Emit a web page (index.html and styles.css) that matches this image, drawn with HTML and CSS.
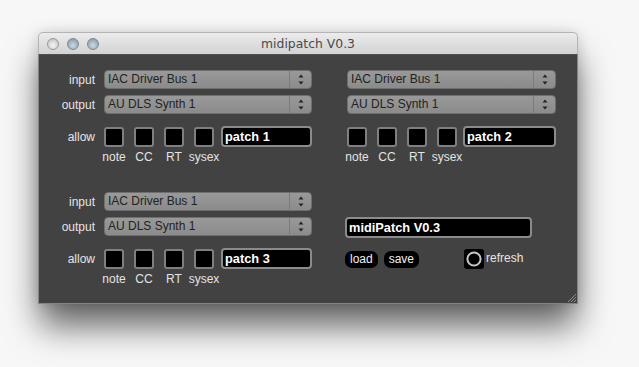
FILE: index.html
```html
<!DOCTYPE html>
<html>
<head>
<meta charset="utf-8">
<title>midipatch V0.3</title>
<link rel="stylesheet" href="styles.css">
</head>
<body>
<div class="window">
  <div class="titlebar">
    <div class="lights"><span class="light close"></span><span class="light mini"></span><span class="light zoom"></span></div>
    <div class="title">midipatch V0.3</div>
    <div></div>
  </div>
  <div class="content">
    <div class="patch">
      <div class="row sel-row">
        <div class="lbl">input</div>
        <div class="select"><span class="val">IAC Driver Bus 1</span><span class="arrows"><svg width="20" height="17" viewBox="0 0 20 17"><path d="M7.5 6.5 L12.5 6.5 L10 3.5 Z M7.5 10.5 L12.5 10.5 L10 13.5 Z" fill="#222"/></svg></span></div>
      </div>
      <div class="row sel-row">
        <div class="lbl">output</div>
        <div class="select"><span class="val">AU DLS Synth 1</span><span class="arrows"><svg width="20" height="17" viewBox="0 0 20 17"><path d="M7.5 6.5 L12.5 6.5 L10 3.5 Z M7.5 10.5 L12.5 10.5 L10 13.5 Z" fill="#222"/></svg></span></div>
      </div>
      <div class="row allow-row">
        <div class="lbl">allow</div>
        <div class="checks"><span class="chk"></span><span class="chk"></span><span class="chk"></span><span class="chk"></span></div>
        <div class="field">patch 1</div>
      </div>
      <div class="row cap-row">
        <div class="lbl"></div>
        <div class="caps"><span class="cap"><span>note</span></span><span class="cap"><span>CC</span></span><span class="cap"><span>RT</span></span><span class="cap"><span>sysex</span></span></div>
      </div>
    </div>

    <div class="patch right">
      <div class="row sel-row">
        <div class="select wide"><span class="val">IAC Driver Bus 1</span><span class="arrows"><svg width="20" height="17" viewBox="0 0 20 17"><path d="M7.5 6.5 L12.5 6.5 L10 3.5 Z M7.5 10.5 L12.5 10.5 L10 13.5 Z" fill="#222"/></svg></span></div>
      </div>
      <div class="row sel-row">
        <div class="select wide"><span class="val">AU DLS Synth 1</span><span class="arrows"><svg width="20" height="17" viewBox="0 0 20 17"><path d="M7.5 6.5 L12.5 6.5 L10 3.5 Z M7.5 10.5 L12.5 10.5 L10 13.5 Z" fill="#222"/></svg></span></div>
      </div>
      <div class="row allow-row">
        <div class="checks"><span class="chk"></span><span class="chk"></span><span class="chk"></span><span class="chk"></span></div>
        <div class="field narrow-gap">patch 2</div>
      </div>
      <div class="row cap-row">
        <div class="caps"><span class="cap"><span>note</span></span><span class="cap"><span>CC</span></span><span class="cap"><span>RT</span></span><span class="cap"><span>sysex</span></span></div>
      </div>
    </div>

    <div class="patch">
      <div class="row sel-row">
        <div class="lbl">input</div>
        <div class="select"><span class="val">IAC Driver Bus 1</span><span class="arrows"><svg width="20" height="17" viewBox="0 0 20 17"><path d="M7.5 6.5 L12.5 6.5 L10 3.5 Z M7.5 10.5 L12.5 10.5 L10 13.5 Z" fill="#222"/></svg></span></div>
      </div>
      <div class="row sel-row">
        <div class="lbl">output</div>
        <div class="select"><span class="val">AU DLS Synth 1</span><span class="arrows"><svg width="20" height="17" viewBox="0 0 20 17"><path d="M7.5 6.5 L12.5 6.5 L10 3.5 Z M7.5 10.5 L12.5 10.5 L10 13.5 Z" fill="#222"/></svg></span></div>
      </div>
      <div class="row allow-row">
        <div class="lbl">allow</div>
        <div class="checks"><span class="chk"></span><span class="chk"></span><span class="chk"></span><span class="chk"></span></div>
        <div class="field">patch 3</div>
      </div>
      <div class="row cap-row">
        <div class="lbl"></div>
        <div class="caps"><span class="cap"><span>note</span></span><span class="cap"><span>CC</span></span><span class="cap"><span>RT</span></span><span class="cap"><span>sysex</span></span></div>
      </div>
    </div>

    <div class="panel">
      <div class="spacer"></div>
      <div class="field name">midiPatch V0.3</div>
      <div class="btn-row">
        <span class="btn">load</span>
        <span class="btn">save</span>
        <span class="toggle"><svg width="20" height="20" viewBox="0 0 20 20"><circle cx="10" cy="10" r="6.6" fill="none" stroke="#c6c6c6" stroke-width="2"/></svg></span>
        <span class="toggle-lbl">refresh</span>
      </div>
    </div>

    <svg class="grip" width="12" height="12" viewBox="0 0 12 12"><path d="M11 3 L3 11 M11 6 L6 11 M11 9 L9 11" stroke="#8e8e8e" stroke-width="1"/></svg>
  </div>
</div>
</body>
</html>
```

FILE: styles.css
```css
html, body {
  margin: 0;
  padding: 0;
}
body {
  background: #f7f7f7;
  width: 639px;
  height: 367px;
  overflow: hidden;
  font-family: "Liberation Sans", Arial, sans-serif;
}
.window {
  margin: 32px 0 0 38px;
  width: 540px;
  height: 272px;
  border-radius: 5px 5px 0 0;
  box-shadow: 0 24px 34px -2px rgba(0, 0, 0, 0.6), 0 0 14px rgba(0, 0, 0, 0.14);
  display: flex;
  flex-direction: column;
}
.titlebar {
  box-sizing: border-box;
  height: 23px;
  border: 1px solid #b4b4b4;
  border-bottom: 1px solid #505050;
  border-radius: 5px 5px 0 0;
  background: linear-gradient(#ececec, #d2d2d2);
  display: grid;
  grid-template-columns: 1fr auto 1fr;
  align-items: center;
}
.lights {
  display: flex;
  gap: 8px;
  padding-left: 8px;
}
.light {
  box-sizing: border-box;
  width: 12px;
  height: 12px;
  border-radius: 50%;
}
.light.close {
  background: radial-gradient(circle at 50% 65%, #f4f4f4 0%, #d9d9d9 50%, #b3b3b3 100%);
  border: 1px solid #999;
}
.light.mini, .light.zoom {
  background: radial-gradient(circle at 50% 65%, #cfd9e0 0%, #a5b5c1 50%, #7f93a2 100%);
  border: 1px solid #7a8a96;
}
.title {
  font-family: "DejaVu Sans", sans-serif;
  font-size: 12.4px;
  color: #4a4a4a;
  line-height: 21px;
}
.content {
  position: relative;
  flex: 1;
  box-sizing: border-box;
  background: #424242;
  border: 1px solid #858585;
  border-top: none;
  padding-top: 15px;
  display: grid;
  grid-template-columns: 273px 1fr;
  column-gap: 33px;
  row-gap: 28px;
  align-content: start;
}
.patch {
  display: flex;
  flex-direction: column;
}
.patch.right {
  padding-left: 2px;
}
.row {
  display: flex;
  align-items: center;
  gap: 9px;
}
.sel-row {
  height: 19px;
}
.sel-row + .sel-row {
  margin-top: 6px;
}
.allow-row {
  height: 21px;
  margin-top: 12px;
  gap: 0;
}
.allow-row .lbl {
  margin-right: 9px;
}
.cap-row {
  height: 14px;
  margin-top: 3px;
}
.lbl {
  width: 56px;
  flex: none;
  text-align: right;
  color: #e4e4e4;
  font-size: 12px;
  line-height: 14px;
}
.select {
  box-sizing: border-box;
  width: 208px;
  height: 19px;
  border: 1px solid #6f6f6f;
  border-radius: 4px;
  background: linear-gradient(#999999, #8b8b8b);
  display: flex;
  align-items: center;
}
.select.wide {
  width: 209px;
}
.val {
  flex: 1;
  padding-left: 3px;
  font-size: 12px;
  color: #222;
  line-height: 17px;
  white-space: nowrap;
}
.arrows {
  width: 21px;
  height: 17px;
  border-left: 1px solid #7b7b7b;
  display: flex;
  justify-content: center;
}
.checks {
  display: flex;
  gap: 10px;
}
.chk {
  box-sizing: border-box;
  width: 20px;
  height: 20px;
  background: #000;
  border: 2px solid #7f7f7f;
  border-radius: 3px;
}
.field {
  box-sizing: border-box;
  height: 21px;
  width: 91px;
  margin-left: 7px;
  background: #000;
  border: 2px solid #8b8b8b;
  border-radius: 4px;
  padding-left: 2px;
  color: #fff;
  font-weight: bold;
  font-size: 12.8px;
  line-height: 17px;
  white-space: nowrap;
}
.field.narrow-gap {
  margin-left: 6px;
  width: 93px;
}
.caps {
  display: flex;
  gap: 10px;
}
.cap {
  width: 20px;
  display: flex;
  justify-content: center;
  white-space: nowrap;
  color: #e4e4e4;
  font-size: 12px;
  line-height: 14px;
}
.panel {
  display: flex;
  flex-direction: column;
}
.spacer {
  height: 19px;
}
.field.name {
  width: 187px;
  margin: 6px 0 0 0;
}
.btn-row {
  height: 20px;
  margin-top: 11px;
  display: flex;
  align-items: center;
}
.btn {
  height: 17px;
  padding: 0 5px;
  border-radius: 7px;
  background: #000;
  color: #f0f0f0;
  font-size: 12px;
  line-height: 17px;
  margin-right: 6px;
}
.toggle {
  width: 20px;
  height: 20px;
  margin-left: 39px;
  background: #000;
  border-radius: 3px;
  display: flex;
}
.toggle-lbl {
  margin-left: 2px;
  margin-top: -2px;
  color: #e6e6e6;
  font-size: 12px;
  line-height: 14px;
}
.grip {
  position: absolute;
  right: 0;
  bottom: 0;
}
```
